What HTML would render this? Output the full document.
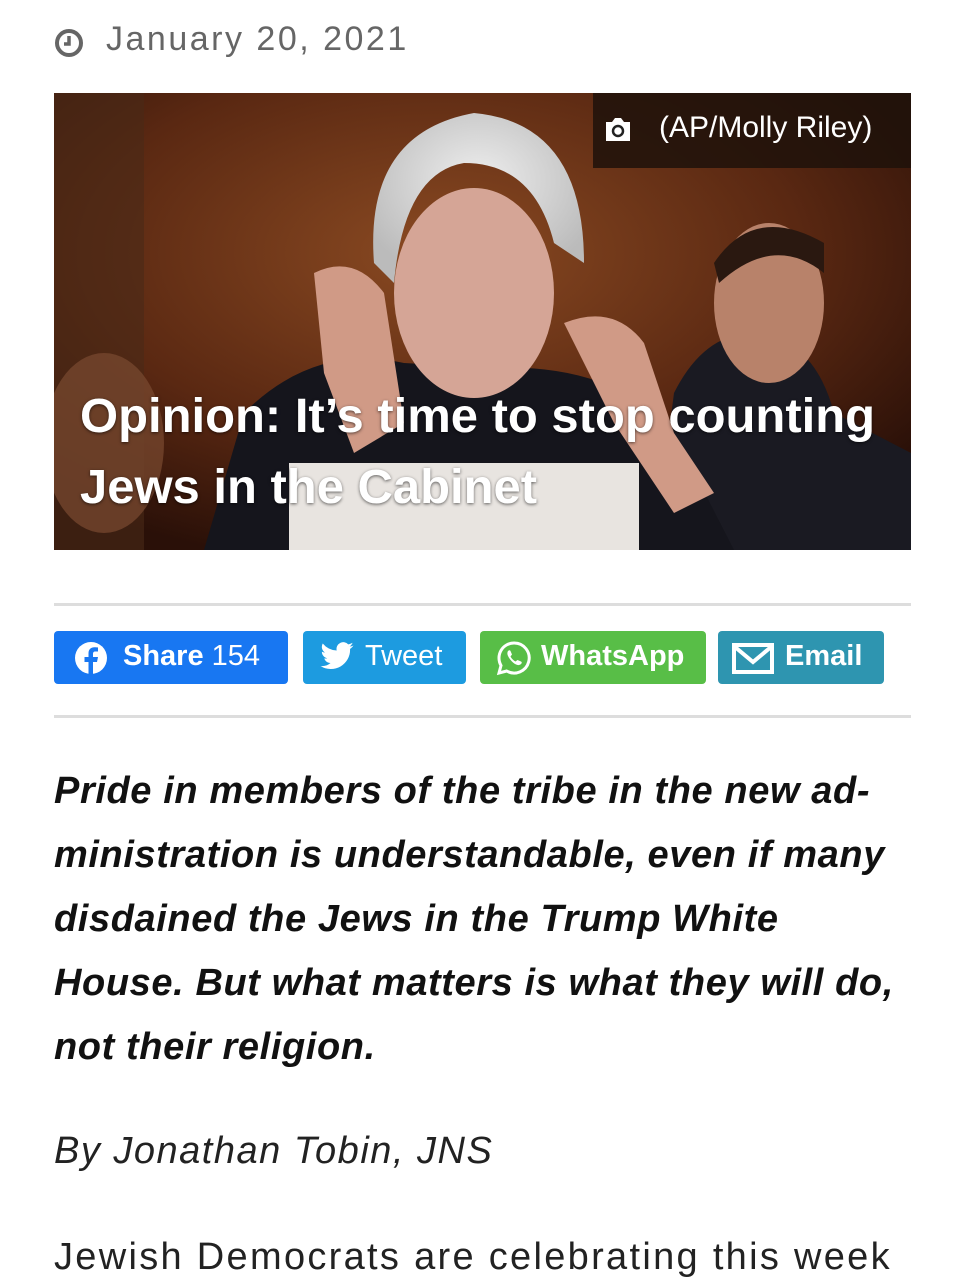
<!DOCTYPE html>
<html><head><meta charset="utf-8"><style>
body{margin:0;width:961px;height:1280px;overflow:hidden;background:#fff;font-family:"Liberation Sans",sans-serif;}
.date{position:absolute;left:54px;top:20px;font-size:34px;color:#666;letter-spacing:2.5px;}
.date svg{position:absolute;left:0;top:8px}
.date span{position:absolute;left:52px;top:0;white-space:nowrap}
.img{position:absolute;left:54px;top:93px;width:857px;height:457px;overflow:hidden;background:#3a1a0c;}
.credit{position:absolute;right:0;top:0;width:318px;height:75px;background:rgba(30,18,10,.85);color:#fff;font-size:30px;}
.title{position:absolute;left:26px;top:288px;color:#fff;font-weight:bold;font-size:48px;line-height:71px;white-space:nowrap;transform:scaleX(1.02);transform-origin:left top;text-shadow:0 1px 3px rgba(0,0,0,.6)}
.hr{position:absolute;left:54px;width:857px;height:3px;background:#ddd}
.btn{position:absolute;top:631px;height:53px;border-radius:4px;color:#fff;font-size:29px;font-weight:bold;}
.btn span{position:absolute;top:9px;white-space:nowrap}
.btn svg{position:absolute}
p{position:absolute;left:54px;margin:0;color:#111;white-space:nowrap}
</style></head><body>
<div class="date"><svg width="30" height="30" viewBox="0 0 30 30"><circle cx="15" cy="15" r="12" fill="none" stroke="#666" stroke-width="4"/><path d="M15 8v8h-5" fill="none" stroke="#666" stroke-width="3.5"/></svg><span>January 20, 2021</span></div>
<div class="img">
<svg width="857" height="457" viewBox="0 0 857 457">
<defs>
<radialGradient id="bg" cx="45%" cy="35%" r="70%"><stop offset="0" stop-color="#8a4a22"/><stop offset=".6" stop-color="#5a2812"/><stop offset="1" stop-color="#2a1008"/></radialGradient>
<radialGradient id="hair" cx="50%" cy="40%" r="60%"><stop offset="0" stop-color="#eeeeee"/><stop offset="1" stop-color="#bbb"/></radialGradient>
</defs>
<rect width="857" height="457" fill="url(#bg)"/>
<rect x="0" y="0" width="90" height="457" fill="#4a2a18" opacity=".6"/>
<ellipse cx="50" cy="350" rx="60" ry="90" fill="#7a4a30" opacity=".7"/>
<path d="M600 457 L620 300 Q650 240 700 240 Q760 245 780 320 L857 360 L857 457Z" fill="#1a1a22"/>
<ellipse cx="715" cy="210" rx="55" ry="80" fill="#b8826a"/>
<path d="M660 170 Q700 110 770 150 L770 180 Q720 140 665 190Z" fill="#2a1810"/>
<path d="M150 457 L190 320 Q260 250 350 270 L440 275 Q560 270 620 340 L680 457Z" fill="#15151c"/>
<ellipse cx="420" cy="200" rx="80" ry="105" fill="#d5a596"/>
<path d="M320 170 Q310 40 420 20 Q530 30 530 170 L500 150 Q480 70 410 70 Q350 80 340 190Z" fill="url(#hair)"/>
<path d="M260 180 Q300 160 330 200 L350 330 L300 360 L270 280Z" fill="#d09a86"/>
<path d="M510 230 Q560 210 590 250 L620 340 L660 400 L620 420 L560 330Z" fill="#d09a86"/>
<rect x="235" y="370" width="350" height="87" fill="#e8e4e0"/>
</svg>
<div class="credit"><svg style="position:absolute;left:10px;top:24px" width="30" height="26" viewBox="0 0 30 26"><path d="M3 5h6l3-4h6l3 4h6v19H3z" fill="#fff"/><circle cx="15" cy="14" r="5" fill="none" stroke="#222" stroke-width="2.5"/></svg><span style="position:absolute;left:66px;top:18px">(AP/Molly Riley)</span></div>
<div class="title">Opinion: It’s time to stop counting<br>Jews in the Cabinet</div>
</div>
<div class="hr" style="top:603px"></div>
<div class="btn" style="left:54px;width:234px;background:#1877f2"><svg style="left:20px;top:10px" width="34" height="34" viewBox="0 0 34 34"><circle cx="17" cy="17" r="16" fill="#fff"/><path d="M19 34V21h4l1-5h-5v-3c0-1.5.5-2.5 2.5-2.5H24V6.5c-.5 0-2-.2-3.5-.2-3.5 0-6 2-6 6V16h-4v5h4v13z" fill="#1877f2"/></svg><span style="left:69px">Share <b style="font-weight:normal">154</b></span></div>
<div class="btn" style="left:303px;width:163px;background:#1d9be0"><svg style="left:16px;top:11px" width="36" height="30" viewBox="0 0 24 20"><path d="M23 2.3c-.8.4-1.7.6-2.6.7.9-.6 1.6-1.4 2-2.5-.9.5-1.9.9-2.9 1.1A4.5 4.5 0 0 0 11.8 5.7 12.8 12.8 0 0 1 2.5 1a4.5 4.5 0 0 0 1.4 6c-.7 0-1.4-.2-2-.6 0 2.2 1.5 4 3.6 4.4-.7.2-1.4.2-2 .1.6 1.8 2.2 3.1 4.2 3.1A9 9 0 0 1 1 16a12.8 12.8 0 0 0 19.7-11.4c.9-.6 1.6-1.4 2.3-2.3z" fill="#fff"/></svg><span style="left:62px;font-weight:normal">Tweet</span></div>
<div class="btn" style="left:480px;width:226px;background:#58be47"><svg style="left:16px;top:9px" width="36" height="36" viewBox="0 0 36 36"><path d="M18 3a15 15 0 0 0-13 22.5L3 33l7.7-2A15 15 0 1 0 18 3z" fill="none" stroke="#fff" stroke-width="3"/><path d="M12 11c1-1 2-1 2.5 0l1.5 3.5-1.5 2c1 2 3 4 5 5l2-1.5 3.5 1.5c1 .5 1 1.5 0 2.5-2 2-5 1-8-1.5s-5-6-5.5-8c-.3-1.5 0-2.5.5-3.5z" fill="#fff"/></svg><span style="left:61px">WhatsApp</span></div>
<div class="btn" style="left:718px;width:166px;background:#2e95b0"><svg style="left:14px;top:12px" width="42" height="31" viewBox="0 0 42 31"><rect x="2" y="2" width="38" height="27" fill="none" stroke="#fff" stroke-width="4"/><path d="M3 4l18 15L39 4" fill="none" stroke="#fff" stroke-width="4"/></svg><span style="left:67px">Email</span></div>
<div class="hr" style="top:715px"></div>
<p style="top:759px;font-size:38px;font-weight:bold;font-style:italic;line-height:64px;letter-spacing:0.6px">Pride in members of the tribe in the new ad-<br>ministration is understandable, even if many<br>disdained the Jews in the Trump White<br>House. But what matters is what they will do,<br>not their religion.</p>
<p style="top:1130px;font-size:38px;font-style:italic;color:#222;letter-spacing:1.5px">By Jonathan Tobin, JNS</p>
<p style="top:1236px;font-size:38px;color:#222;letter-spacing:2.3px">Jewish Democrats are celebrating this week</p>
</body></html>
